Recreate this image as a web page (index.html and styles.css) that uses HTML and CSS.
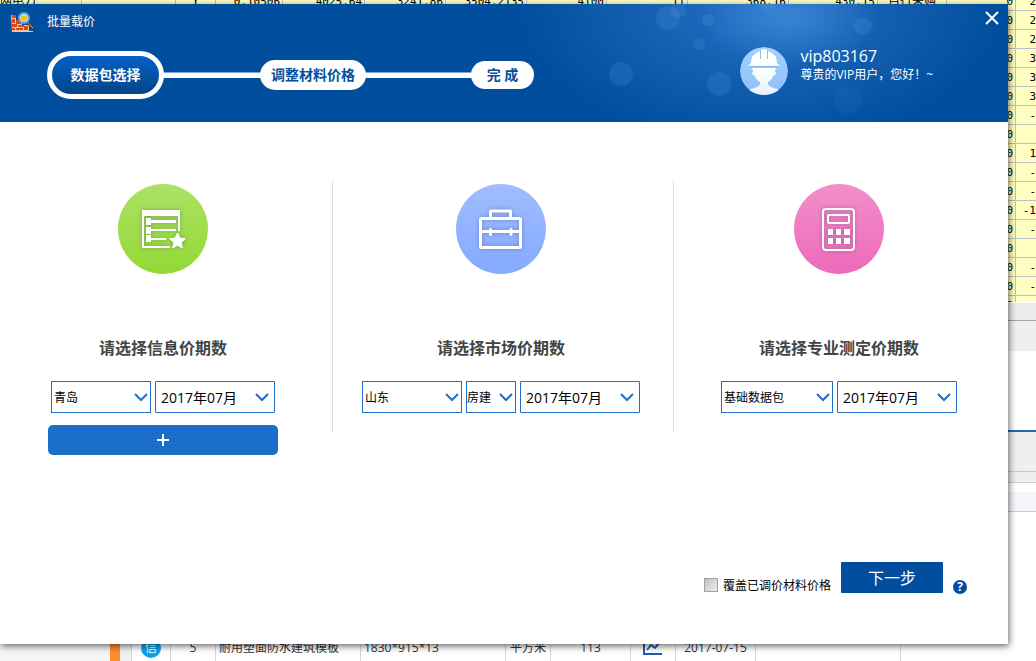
FILE: index.html
```html
<!DOCTYPE html>
<html lang="zh-CN">
<head>
<meta charset="utf-8">
<meta name="viewport" content="width=device-width, initial-scale=1">
<title>批量载价</title>
<link rel="stylesheet" href="styles.css">
</head>
<body>
<div class="backdrop" aria-hidden="true">
  <div class="sheet">
    <table class="sheet-table">
      <colgroup>
        <col class="w82"><col class="w94"><col class="w40"><col class="w67"><col class="w82"><col class="w81"><col class="w81"><col class="w80"><col class="w81"><col class="w101"><col class="w89"><col class="w69"><col class="w69"><col>
      </colgroup>
      <tr><td class="left">网电刀</td><td></td><td class="center">Y</td><td>0.10506</td><td>4025.64</td><td>3241.86</td><td>3504.2135</td><td>4100</td><td>11</td><td>368.16</td><td>430.15</td><td class="center">自行采购</td><td>0</td><td class="last">2</td></tr>
      <tr><td colspan="12"></td><td>0</td><td class="last">2</td></tr>
      <tr><td colspan="12"></td><td>0</td><td class="last">2</td></tr>
      <tr><td colspan="12"></td><td>0</td><td class="last">3</td></tr>
      <tr><td colspan="12"></td><td>0</td><td class="last">3</td></tr>
      <tr><td colspan="12"></td><td>0</td><td class="last">3</td></tr>
      <tr><td colspan="12"></td><td>0</td><td class="last">-</td></tr>
      <tr><td colspan="12"></td><td>0</td><td class="last"></td></tr>
      <tr><td colspan="12"></td><td>0</td><td class="last">1</td></tr>
      <tr><td colspan="12"></td><td>0</td><td class="last">-</td></tr>
      <tr><td colspan="12"></td><td>0</td><td class="last">-</td></tr>
      <tr><td colspan="12"></td><td>0</td><td class="last">-1</td></tr>
      <tr><td colspan="12"></td><td>0</td><td class="last">-</td></tr>
      <tr><td colspan="12"></td><td>0</td><td class="last"></td></tr>
      <tr><td colspan="12"></td><td>0</td><td class="last">-</td></tr>
      <tr><td colspan="12"></td><td>0</td><td class="last">-</td></tr>
      <tr><td colspan="12"></td><td>0</td><td class="last"></td></tr>
    </table>
  </div>
  <div class="scroll-strip"></div>
  <div class="tab-strip"></div>
  <div class="blank-pane"></div>
  <div class="tool-strip"></div>
  <div class="sub-strip"></div>
  <div class="head-strip"></div>
  <div class="result">
    <div class="tree"></div>
    <div class="splitter"></div>
    <div class="gutter"></div>
    <div class="cell c39"><span class="info">信</span></div>
    <div class="cell c45">5</div>
    <div class="cell c145">耐用塑面防水建筑模板</div>
    <div class="cell c145">1830*915*13</div>
    <div class="cell c45">平方米</div>
    <div class="cell c80">113</div>
    <div class="cell c45"><svg width="20" height="16" viewBox="0 0 20 16"><path d="M1 1v13h18M4 10l4-5 4 3 5-6" fill="none" stroke="#1d5fae" stroke-width="2"/></svg></div>
    <div class="cell c80">2017-07-15</div>
    <div class="cell c145"></div>
  </div>
</div>

<main class="dialog">
  <header class="header">
    <svg class="bokeh" viewBox="0 0 428 118" aria-hidden="true">
      <g fill="#6aa9ee" fill-opacity=".16">
        <circle cx="88" cy="14" r="12"/><circle cx="98" cy="6" r="8"/><circle cx="128" cy="16" r="6"/>
        <circle cx="119" cy="40" r="6"/><circle cx="41" cy="70" r="12"/><circle cx="139" cy="80" r="12"/>
        <circle cx="283" cy="22" r="9"/><circle cx="187" cy="-4" r="10"/>
      </g>
      <circle cx="268" cy="96" r="14" fill="#3c85d6" fill-opacity=".12"/>
    </svg>
    <div class="title-bar">
      <svg width="24" height="20" viewBox="0 0 24 20" aria-hidden="true">
        <path fill="#f6c49c" d="M0 3h5v5h6v5h7v6h4v1H1z"/>
        <path fill="#d9441c" d="M1 3h4v3H1zM1 7h3v4H1zM5 8h5v4H5zM1 12h5v3H1zM7 13h6v2H7zM1 16h3v2H1zM5 16h7v2H5zM13 14h4v4h-4z"/>
        <path stroke="#5b3a1c" stroke-width="3" d="M17 11l5 5"/><path stroke="#e8a53a" d="M17 11l5 5"/>
        <circle cx="13" cy="6" r="5" fill="#cfe8e6" stroke="#5aa3d8" stroke-width="2"/>
        <path fill="#e9c318" d="M10 3l3 1 3-1v4l-3 3-3-3z"/>
      </svg>
      <h1 class="title">批量载价</h1>
      <button class="close" type="button" aria-label="关闭"><svg width="14" height="14" viewBox="0 0 14 14"><path d="M1 1l12 12M13 1L1 13" stroke="#fff" stroke-width="2"/></svg></button>
    </div>
    <div class="header-row">
      <ol class="steps">
        <li class="step current">数据包选择</li>
        <li class="step">调整材料价格</li>
        <li class="step end">完 成</li>
      </ol>
      <div class="user">
        <svg width="48" height="48" viewBox="0 0 48 48" aria-hidden="true">
          <defs>
            <linearGradient id="av" x2="0" y2="1"><stop stop-color="#a4d0fc"/><stop offset="1" stop-color="#8cc0fb"/></linearGradient>
            <linearGradient id="bd" x2="0" y2="1"><stop stop-color="#fff"/><stop offset="1" stop-color="#e6effc"/></linearGradient>
            <clipPath id="cp"><circle cx="24" cy="24" r="24"/></clipPath>
          </defs>
          <g clip-path="url(#cp)">
            <circle cx="24" cy="24" r="24" fill="url(#av)"/>
            <path fill="url(#bd)" d="M12 21h24l-1 4q2 1 0 3l-2 1q-1 4-5 6v2q1 3 9 5l7 4v4H4v-4l7-4q8-2 9-5v-2q-4-2-5-6l-2-1q-2-2 0-3z"/>
            <path fill="#fff" d="M11 16q0-9 9-12v6h1V3q3-2 6 0v7h1V4q9 3 9 12 2 1 2 3H9q0-2 2-3z"/>
            <path stroke="#7fb2ee" d="M9 19.500h30" />
            <path fill="none" stroke="#8fbdf4" d="M20.500 4v8M27.500 4v8"/>
          </g>
        </svg>
        <div>
          <div class="user-name">vip803167</div>
          <div class="user-note">尊贵的VIP用户，您好！~</div>
        </div>
      </div>
    </div>
  </header>

  <div class="columns">
    <section class="source first">
      <svg width="90" height="90" viewBox="0 0 90 90" aria-hidden="true">
        <defs><linearGradient id="g" x2="0" y2="1"><stop stop-color="#abe265"/><stop offset="1" stop-color="#93d935"/></linearGradient></defs>
        <circle cx="45" cy="45" r="45" fill="url(#g)"/>
        <g class="glyph">
          <path fill="none" stroke="#fff" stroke-width="2" d="M52 63H25V30h36v17"/>
          <path fill="#fff" d="M24 26h38v6H24zM28 34h5v7h-5zM28 43h5v7h-5zM28 51h5v7h-5zM33 36h25v3H33zM33 45h25v2H33zM33 54h15v2H33z"/>
          <path fill="#fff" stroke="#fff" stroke-linejoin="round" d="M59.500 49l2.400 5 5.400.7-4 3.800 1 5.500-4.800-2.700-4.800 2.700 1-5.500-4-3.800 5.400-.7z"/>
        </g>
      </svg>
      <h2 class="source-title">请选择信息价期数</h2>
      <div class="fields">
        <div class="field w100"><select aria-label="地区"><option>青岛</option></select><svg viewBox="0 0 14 9"><path d="M1 1l6 6 6-6"/></svg></div>
        <div class="field date"><select aria-label="信息价期数"><option>2017年07月</option></select><svg viewBox="0 0 14 9"><path d="M1 1l6 6 6-6"/></svg></div>
      </div>
      <button class="add" type="button" aria-label="添加"><svg width="14" height="14" viewBox="0 0 14 14"><path d="M7 1v12M1 7h12" stroke="#fff" stroke-width="2"/></svg></button>
    </section>
    <section class="source second">
      <svg width="90" height="90" viewBox="0 0 90 90" aria-hidden="true">
        <defs><linearGradient id="b" x2="0" y2="1"><stop stop-color="#a1bcff"/><stop offset="1" stop-color="#84aaff"/></linearGradient></defs>
        <circle cx="45" cy="45" r="45" fill="url(#b)"/>
        <g class="glyph" fill="none" stroke="#fff" stroke-width="3" stroke-linejoin="round" stroke-linecap="round">
          <rect x="24.500" y="34.500" width="40" height="29" rx="1"/>
          <path d="M34.500 34v-7h20v7M25 47.500h8M36 47.500h17M56 47.500h8M34.500 45.500v5M55 45.500v5"/>
        </g>
      </svg>
      <h2 class="source-title">请选择市场价期数</h2>
      <div class="fields">
        <div class="field w100"><select aria-label="地区"><option>山东</option></select><svg viewBox="0 0 14 9"><path d="M1 1l6 6 6-6"/></svg></div>
        <div class="field w50"><select aria-label="类别"><option>房建</option></select><svg viewBox="0 0 14 9"><path d="M1 1l6 6 6-6"/></svg></div>
        <div class="field date"><select aria-label="市场价期数"><option>2017年07月</option></select><svg viewBox="0 0 14 9"><path d="M1 1l6 6 6-6"/></svg></div>
      </div>
    </section>
    <section class="source third">
      <svg width="90" height="90" viewBox="0 0 90 90" aria-hidden="true">
        <defs><linearGradient id="p" x2="0" y2="1"><stop stop-color="#f18fca"/><stop offset="1" stop-color="#ed6abb"/></linearGradient></defs>
        <circle cx="45" cy="45" r="45" fill="url(#p)"/>
        <g class="glyph">
          <rect x="29" y="25" width="31" height="41" rx="3" fill="none" stroke="#fff" stroke-width="2"/>
          <rect x="34" y="31" width="21" height="8" rx="1" fill="none" stroke="#fff" stroke-width="2"/>
          <path fill="#fff" d="M34 45h5v6h-5zM42 45h5v6h-5zM50 45h6v6h-6zM34 54h5v6h-5zM42 54h5v6h-5zM50 54h6v6h-6z"/>
        </g>
      </svg>
      <h2 class="source-title">请选择专业测定价期数</h2>
      <div class="fields">
        <div class="field w112"><select aria-label="数据包"><option>基础数据包</option></select><svg viewBox="0 0 14 9"><path d="M1 1l6 6 6-6"/></svg></div>
        <div class="field date"><select aria-label="专业测定价期数"><option>2017年07月</option></select><svg viewBox="0 0 14 9"><path d="M1 1l6 6 6-6"/></svg></div>
      </div>
    </section>
  </div>

  <footer class="footer">
    <label class="cover"><input type="checkbox"><span>覆盖已调价材料价格</span></label>
    <button class="next" type="button">下一步</button>
    <button class="help" type="button" aria-label="帮助">?</button>
  </footer>
</main>
</body>
</html>
```

FILE: styles.css
```css
* { box-sizing: border-box; }

body {
  position: relative;
  min-height: 100vh;
  margin: 0;
  overflow: hidden;
  background: #fff;
  color: #000;
  font: 12px/16px "Open Sans", "Noto Sans CJK SC", sans-serif;
}

button, select, input { margin: 0; font: inherit; }
h1, h2, ol { margin: 0; padding: 0; }
svg { display: block; flex: none; }

/* Application window behind the dialog */
.backdrop {
  display: flex;
  flex-direction: column;
  height: 100vh;
}
.sheet {
  flex: 0 0 302px;
  overflow: hidden;
  background: #ffffc2;
}
.sheet-table {
  width: 100%;
  margin-top: -8px;
  table-layout: fixed;
  border-spacing: 0;
  font: 11px/18px "DejaVu Sans Mono", "Noto Sans CJK SC", monospace;
}
.sheet-table td {
  height: 19px;
  padding: 1px 2px 0;
  border-right: 1px solid #c0c0c0;
  border-bottom: 1px solid #c0c0c0;
  line-height: 17px;
  text-align: right;
  white-space: nowrap;
}
.sheet-table .left { text-align: left; padding: 0; }
.sheet-table .center { text-align: center; }
.sheet-table .last { padding: 0; border-right: 0; }
.sheet-table .left, .sheet-table .center { font-size: 12px; }
.w40 { width: 40px; } .w67 { width: 67px; } .w69 { width: 69px; }
.w80 { width: 80px; } .w81 { width: 81px; } .w82 { width: 82px; }
.w89 { width: 89px; } .w94 { width: 94px; } .w101 { width: 101px; }

.scroll-strip { flex: 0 0 19px; background: #ececec; border-top: 1px solid #fff; border-bottom: 1px solid #a3a5a8; }
.tab-strip { flex: 0 0 30px; background: #efefef; }
.blank-pane { flex: 0 0 79px; }
.tool-strip { flex: 0 0 42px; background: #efefef; border-top: 2px solid #2467b2; border-bottom: 1px solid #c9c9cb; }
.sub-strip { flex: 0 0 11px; background: #efefef; border-bottom: 1px solid #d0d0d2; }
.head-strip { flex: 0 0 29px; margin-bottom: auto; border-top: 9px solid #fff; border-bottom: 1px solid #c9ccd0; background: #f4f6f9; }
.result {
  display: flex;
  flex: 0 0 26px;
  color: #333;
}
.tree { width: 110px; background: #f5f5f5; }
.splitter { width: 10px; background: #ff8c2d; }
.gutter { width: 12px; background: #f0f0f0; border-right: 1px solid #d8d8d8; }
.cell {
  display: flex;
  align-items: center;
  justify-content: center;
  border-right: 1px solid #d8d8d8;
  white-space: nowrap;
}
.c39 { width: 39px; } .c45 { width: 45px; } .c80 { width: 80px; }
.c145 { width: 145px; justify-content: flex-start; padding-left: 3px; }
.info {
  width: 20px;
  border-radius: 10px;
  background: #0aa2ee;
  color: #fff;
  line-height: 20px;
  text-align: center;
}

/* Dialog */
.dialog {
  position: absolute;
  inset: 4px 28px 17px 0;
  display: flex;
  flex-direction: column;
  background: #fff;
  box-shadow: 1px 2px 7px rgba(0, 0, 0, .6);
}
.header {
  position: relative;
  height: 118px;
  background:
    radial-gradient(ellipse 90px 50px at 790px 14px, rgba(80, 155, 235, .5), transparent),
    radial-gradient(ellipse 240px 140px at 760px 0, rgba(60, 135, 220, .6), transparent),
    #024e9e;
  color: #fff;
}
.bokeh {
  position: absolute;
  top: 0;
  right: 0;
  width: 428px;
  height: 118px;
}
.title-bar {
  position: relative;
  display: flex;
  align-items: center;
  gap: 12px;
  height: 36px;
  padding: 0 9px 0 11px;
}
.title { font-size: 12px; font-weight: 400; }
.close {
  align-self: flex-start;
  margin-left: auto;
  margin-top: 7px;
  padding: 0;
  border: 0;
  background: none;
}
.header-row {
  position: relative;
  display: flex;
  align-items: center;
  justify-content: space-between;
  height: 70px;
  padding: 0 75px 0 47px;
}
.steps {
  display: flex;
  align-items: center;
  background: linear-gradient(#7fa6ce 0 1px, #fff 1px) 100px 21px / 380px 6px no-repeat;
  list-style: none;
  font-size: 14px;
  font-weight: 700;
}
.step {
  display: flex;
  align-items: center;
  justify-content: center;
  width: 106px;
  height: 30px;
  border-radius: 15px;
  background: #fff;
  color: #024e9e;
  white-space: nowrap;
}
.step + .step { margin-left: 96px; }
.step + .step.end { width: 63px; height: 28px; margin-left: 105px; }
.step.current {
  width: 117px;
  height: 48px;
  border: 5px solid #fff;
  border-radius: 24px;
  background: linear-gradient(#0361c9, #034587);
  color: #fff;
}
.user {
  display: flex;
  align-self: flex-start;
  gap: 12px;
  margin-top: 7px;
}
.user-name { font-size: 16px; line-height: 18px; }
.user-note { line-height: 20px; white-space: nowrap; }

.columns {
  display: grid;
  grid-template-columns: 333fr 341fr 334fr;
  margin-top: 59px;
}
.source {
  display: flex;
  flex-direction: column;
  align-items: center;
  height: 251px;
  padding-top: 3px;
  border-right: 1px solid #dcdcdc;
}
.first { padding-right: 6px; }
.second { padding-right: 4px; }
.third { border: 0; padding-right: 4px; }
.glyph { filter: drop-shadow(0 0 2px rgba(40, 40, 80, .35)); }
.source-title {
  margin: 62px 0 21px;
  color: #444;
  font-size: 16px;
  font-weight: 700;
  line-height: 24px;
}
.fields { display: flex; gap: 4px; }
.field { display: grid; height: 32px; align-items: center; }
.field > * { grid-area: 1 / 1; }
.field select {
  appearance: none;
  width: 100%;
  height: 32px;
  padding: 2px 2px 0;
  border: 1px solid #1d6fc9;
  border-radius: 0;
  background: #fff;
  color: #000;
}
.field svg {
  justify-self: end;
  width: 14px;
  height: 9px;
  margin-right: 3px;
  fill: none;
  stroke: #1d6fc9;
  stroke-width: 2;
  pointer-events: none;
}
.w100 { width: 100px; }
.w112 { width: 112px; }
.w50 { width: 50px; }
.field.w50 select { padding: 2px 0 0; }
.date { width: 120px; }
.field.date select { padding: 2px 5px 0; border-radius: 1px; font-size: 14px; }
.field.date svg { margin-right: 6px; }
.add {
  display: flex;
  flex: none;
  align-items: center;
  justify-content: center;
  width: 230px;
  height: 30px;
  margin-top: 12px;
  border: 0;
  border-radius: 5px;
  background: #1b6ec9;
}

.footer {
  display: flex;
  align-items: flex-end;
  justify-content: flex-end;
  gap: 10px;
  margin-top: auto;
  padding: 0 41px 50px;
}
.cover { display: flex; align-items: center; gap: 5px; }
.cover span { padding-top: 2px; }
.cover input {
  appearance: none;
  width: 14px;
  height: 14px;
  border: 1px solid #a0a0a2;
  background: linear-gradient(135deg, #bfc1c5, #eeeff1);
}
.cover input:checked { background: #024e9e; }
.next {
  width: 102px;
  height: 31px;
  margin-bottom: 1px;
  padding: 0;
  border: 0;
  border-radius: 1px;
  background: #024e9e;
  color: #fff;
  font-size: 16px;
}
.help {
  width: 14px;
  height: 14px;
  padding: 0;
  border: 0;
  border-radius: 7px;
  background: #024e9e;
  color: #fff;
  font-weight: 700;
  line-height: 14px;
}
```
